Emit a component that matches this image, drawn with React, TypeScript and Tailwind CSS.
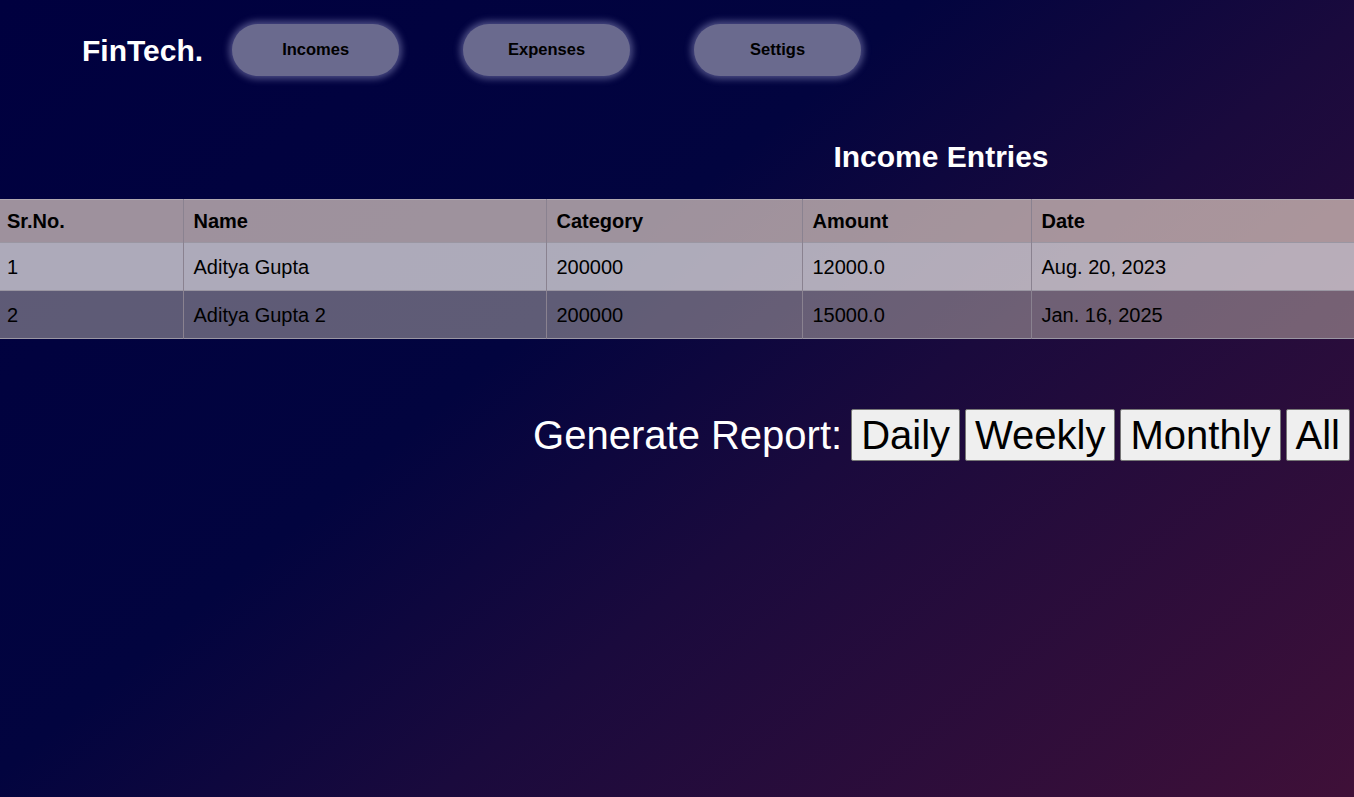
import React from 'react';

const navItems = ['Incomes', 'Expenses', 'Settigs'];

const entries = [
  { id: 1, name: 'Aditya Gupta', category: '200000', amount: '12000.0', date: 'Aug. 20, 2023' },
  { id: 2, name: 'Aditya Gupta 2', category: '200000', amount: '15000.0', date: 'Jan. 16, 2025' },
];

const reportButtons = ['Daily', 'Weekly', 'Monthly', 'All'];

export default function App() {
  return (
    <div
      className="min-h-[797px] w-full bg-[linear-gradient(140deg,#00003f_0%,#02043f_40%,#1a0a3d_60%,#3f1038_100%)] text-black"
      style={{ fontFamily: '"Liberation Sans", Arial, sans-serif' }}
    >
      {/* nav */}
      <div className="flex items-center pl-[82px] pt-[24px]">
        <span className="text-[30px] font-bold text-white mr-[29px]">FinTech.</span>
        <div className="flex gap-[64px]">
          {navItems.map((item) => (
            <button
              key={item}
              className="w-[167px] h-[52px] pb-[2px] rounded-full bg-[#6a6a8e] text-[16.5px] font-bold text-black shadow-[0_0_7px_3px_rgba(170,170,220,0.45)]"
            >
              {item}
            </button>
          ))}
        </div>
      </div>

      <h2 className="pl-[528px] pt-[64px] text-center text-[30px] leading-[34px] font-bold text-white">
        Income Entries
      </h2>

      {/* table */}
      <table className="mt-[25px] w-full border-collapse text-[20px] text-black">
        <thead>
          <tr className="h-[43px] bg-[rgba(255,234,215,0.62)] border-t border-[#b0a8b0]">
            <th className="w-[183px] pl-[7px] text-left font-bold border-r border-[#8a8290]">Sr.No.</th>
            <th className="w-[363px] pl-[10px] text-left font-bold border-r border-[#8a8290]">Name</th>
            <th className="w-[256px] pl-[10px] text-left font-bold border-r border-[#8a8290]">Category</th>
            <th className="w-[229px] pl-[10px] text-left font-bold border-r border-[#8a8290]">Amount</th>
            <th className="pl-[10px] text-left font-bold">Date</th>
          </tr>
        </thead>
        <tbody>
          {entries.map((e, i) => (
            <tr
              key={e.id}
              className={
                i === 0
                  ? 'h-[48px] bg-[rgba(255,250,245,0.68)] border-t border-[#9a96a2]'
                  : 'h-[48px] bg-[rgba(255,245,215,0.37)] border-t border-b border-[#9a96a2]'
              }
            >
              <td className="pl-[7px] border-r border-[#8a8290]">{e.id}</td>
              <td className="pl-[10px] border-r border-[#8a8290]">{e.name}</td>
              <td className="pl-[10px] border-r border-[#8a8290]">{e.category}</td>
              <td className="pl-[10px] border-r border-[#8a8290]">{e.amount}</td>
              <td className="pl-[10px]">{e.date}</td>
            </tr>
          ))}
        </tbody>
      </table>

      {/* report */}
      <div className="flex items-center justify-end pr-[4px] mt-[66px]">
        <span className="text-[40px] text-white mr-[9px]">Generate Report:</span>
        <div className="flex gap-[5px]">
          {reportButtons.map((b) => (
            <button
              key={b}
              className="h-[52px] px-[9px] bg-[#efefef] border border-[#767676] rounded-[2px] text-[40px] leading-[46px] text-black"
            >
              {b}
            </button>
          ))}
        </div>
      </div>
    </div>
  );
}
